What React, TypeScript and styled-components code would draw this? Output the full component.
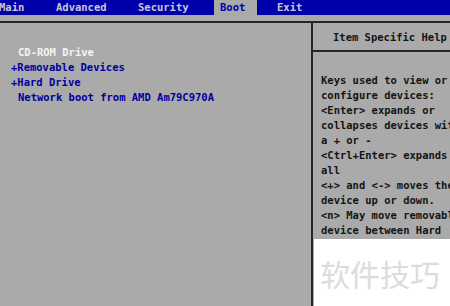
import React from "react";
import styled, { createGlobalStyle } from "styled-components";

const Global = createGlobalStyle`
  html, body { margin: 0; padding: 0; background: #aaaaaa; }
  #root { width: 450px; height: 306px; }
`;

const Screen = styled.div`
  position: relative;
  width: 450px;
  height: 306px;
  overflow: hidden;
  background: #aaaaaa;
  font-family: "DejaVu Sans Mono", "Liberation Mono", monospace;
  font-size: 10.5px;
  font-weight: bold;
  line-height: 15px;
  display: flex;
  flex-direction: column;
`;

const MenuBar = styled.div`
  height: 15px;
  background: #0000aa;
  display: flex;
  align-items: center;
  white-space: pre;
`;

const MenuItem = styled.div<{ $at: number; $active?: boolean }>`
  position: absolute;
  left: ${(p) => p.$at}px;
  top: 0;
  height: 15px;
  line-height: 15px;
  color: ${(p) => (p.$active ? "#0000aa" : "#c8c8d8")};
  background: ${(p) => (p.$active ? "#aaaaaa" : "transparent")};
  padding: ${(p) => (p.$active ? "0 12px 0 6px" : "0")};
  margin-left: ${(p) => (p.$active ? "-6px" : "0")};
`;

const Body = styled.div`
  margin-top: 6px;
  border-top: 2px solid #262626;
  flex: 1;
  display: flex;
  min-height: 0;
`;

const LeftPanel = styled.div`
  width: 311px;
  border-right: 2px solid #262626;
  padding-top: 22px;
  display: flex;
  flex-direction: column;
`;

const Item = styled.div<{ $selected?: boolean; $indent: number }>`
  height: 15px;
  white-space: pre;
  padding-left: ${(p) => p.$indent}px;
  color: ${(p) => (p.$selected ? "#f4f4f4" : "#0000a0")};
`;

const RightPanel = styled.div`
  flex: 1;
  display: flex;
  flex-direction: column;
  min-width: 0;
  overflow: hidden;
`;

const HelpHeader = styled.div`
  height: 29px;
  padding-top: 7px;
  box-sizing: border-box;
  padding-left: 20px;
  border-bottom: 2px solid #262626;
  color: #141414;
  white-space: pre;
`;

const HelpBody = styled.div`
  padding-top: 21px;
  padding-left: 8px;
  color: #141414;
  white-space: pre;
`;

const HelpLine = styled.div`
  height: 15px;
`;

const Watermark = styled.div`
  position: absolute;
  left: 314px;
  top: 239px;
  right: 0;
  bottom: 0;
  background: #ffffff;
  display: flex;
  align-items: center;
  padding-left: 6px;
  font-family: "Noto Sans CJK SC", "Noto Sans", sans-serif;
  font-weight: normal;
  font-size: 30px;
  line-height: 1;
  color: #dcdcdc;
  white-space: nowrap;
`;

const menu = [
  { label: "Main", at: -1 },
  { label: "Advanced", at: 56 },
  { label: "Security", at: 138 },
  { label: "Boot", at: 220, active: true },
  { label: "Exit", at: 277 },
];

const items = [
  { text: "CD-ROM Drive", indent: 18, selected: true },
  { text: "+Removable Devices", indent: 11 },
  { text: "+Hard Drive", indent: 11 },
  { text: "Network boot from AMD Am79C970A", indent: 18 },
];

const help = [
  "Keys used to view or",
  "configure devices:",
  "<Enter> expands or",
  "collapses devices with",
  "a + or -",
  "<Ctrl+Enter> expands",
  "all",
  "<+> and <-> moves the",
  "device up or down.",
  "<n> May move removable",
  "device between Hard",
];

export default function App() {
  return (
    <>
      <Global />
      <Screen>
        <MenuBar>
          {menu.map((m) => (
            <MenuItem key={m.label} $at={m.at} $active={m.active}>
              {m.label}
            </MenuItem>
          ))}
        </MenuBar>
        <Body>
          <LeftPanel>
            {items.map((it) => (
              <Item key={it.text} $indent={it.indent} $selected={it.selected}>
                {it.text}
              </Item>
            ))}
          </LeftPanel>
          <RightPanel>
            <HelpHeader>Item Specific Help</HelpHeader>
            <HelpBody>
              {help.map((l, i) => (
                <HelpLine key={i}>{l}</HelpLine>
              ))}
            </HelpBody>
          </RightPanel>
        </Body>
        <Watermark>软件技巧</Watermark>
      </Screen>
    </>
  );
}
